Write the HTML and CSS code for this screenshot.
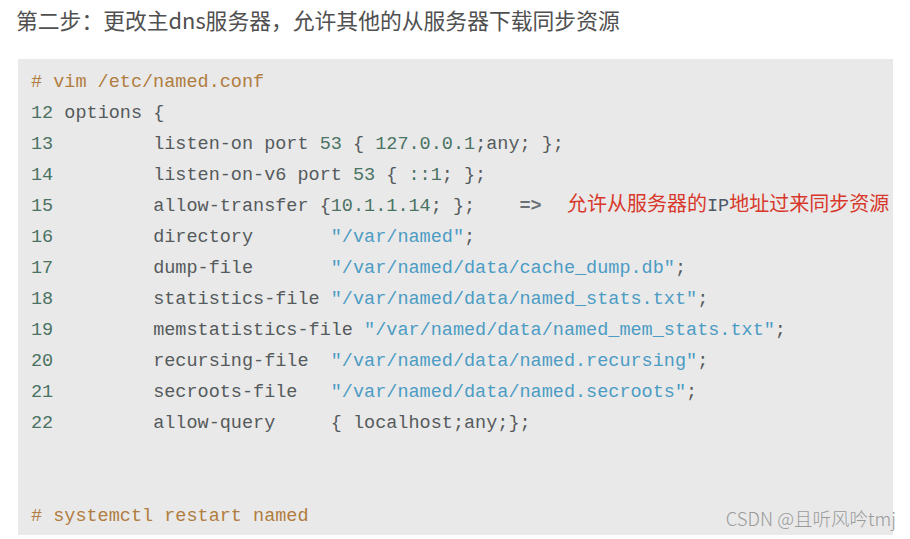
FILE: index.html
```html
<!DOCTYPE html>
<html lang="zh">
<head>
<meta charset="utf-8">
<title>dns</title>
<link rel="stylesheet" href="styles.css">
</head>
<body>
<p class="title">第二步：更改主dns服务器，允许其他的从服务器下载同步资源</p>
<div class="block">
<pre class="code"><span class="c"># vim /etc/named.conf</span>
<span class="n">12</span> options {
<span class="n">13</span>         listen-on port <span class="n">53</span> { <span class="n">127.0.0.1</span>;any; };
<span class="n">14</span>         listen-on-v6 port <span class="n">53</span> { <span class="n">::1</span>; };
<span class="n">15</span>         allow-transfer {<span class="n">10.1.1.14</span>; };    <span class="op">=&gt;</span>  <span class="red">允许从服务器的<span class="ip">IP</span>地址过来同步资源</span>
<span class="n">16</span>         directory       <span class="s">"/var/named"</span>;
<span class="n">17</span>         dump-file       <span class="s">"/var/named/data/cache_dump.db"</span>;
<span class="n">18</span>         statistics-file <span class="s">"/var/named/data/named_stats.txt"</span>;
<span class="n">19</span>         memstatistics-file <span class="s">"/var/named/data/named_mem_stats.txt"</span>;
<span class="n">20</span>         recursing-file  <span class="s">"/var/named/data/named.recursing"</span>;
<span class="n">21</span>         secroots-file   <span class="s">"/var/named/data/named.secroots"</span>;
<span class="n">22</span>         allow-query     { localhost;any;};


<span class="c"># systemctl restart named</span></pre>
<span class="mark">CSDN @且听风吟tmj</span>
</div>
</body>
</html>
```
FILE: styles.css
```css
html, body {
  margin: 0;
  padding: 0;
  background: #ffffff;
}
body {
  padding: 4px 17px 0 18px;
  width: 875px;
}
.title {
  margin: 0 0 0 -2px;
  height: 55px;
  line-height: 32px;
  font-family: "Noto Sans CJK SC", "Noto Sans", sans-serif;
  font-size: 21.8px;
  color: #505050;
}
.block {
  position: relative;
  background: #e9e9e9;
  height: 476px;
  box-sizing: border-box;
  padding: 8px 13px 0 13px;
}
.code {
  margin: 0;
  font-family: "Liberation Mono", "Noto Sans CJK SC", monospace;
  font-size: 18.5px;
  line-height: 31px;
  color: #555a5c;
  white-space: pre;
}
.c { color: #b07d40; }
.n { color: #4a7363; }
.s { color: #4c9cc4; }
.op { color: #6b7075; font-weight: bold; }
.red {
  color: #d8382b;
  font-family: "Noto Sans CJK SC", sans-serif;
  font-size: 20px;
  line-height: 1;
  margin-left: 3px;
}
.ip {
  color: #4d5868;
  font-family: "Liberation Mono", monospace;
  font-size: 18.5px;
}
.mark {
  position: absolute;
  right: -3px;
  bottom: 4px;
  font-family: "Noto Sans CJK SC", "Liberation Sans", sans-serif;
  font-size: 18.5px;
  font-weight: 300;
  color: #9a9a9a;
}
```
